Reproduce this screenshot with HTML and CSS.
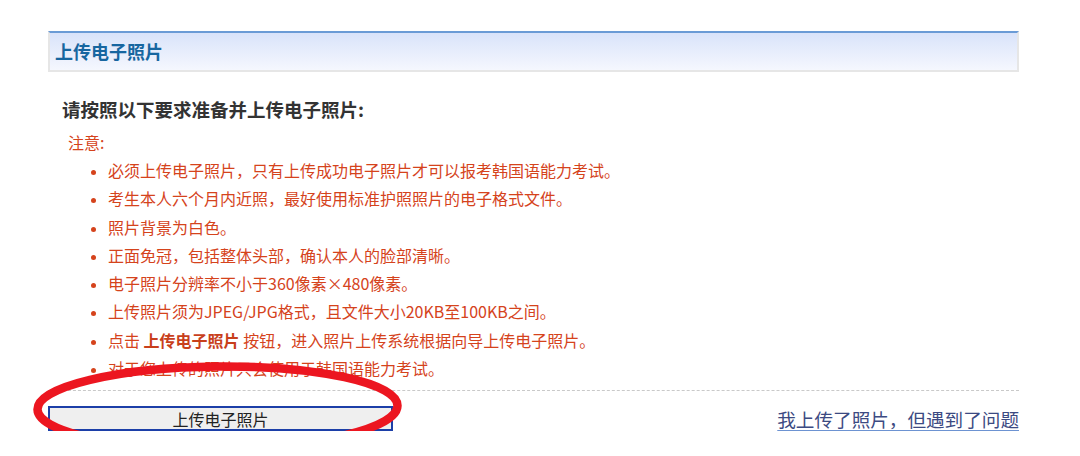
FILE: index.html
```html
<!DOCTYPE html>
<html lang="zh-CN">
<head>
    <meta charset="UTF-8">
    <title>上传电子照片</title>
    <link rel="stylesheet" href="styles.css">
</head>
<body>
    <div class="wrap">
        <!-- panel header -->
        <div class="panel-title">上传电子照片</div>

        <h3 class="intro">请按照以下要求准备并上传电子照片:</h3>

        <div class="notes">
            <p class="notes-label">注意:</p>
            <ul class="notes-list">
                <li>必须上传电子照片，只有上传成功电子照片才可以报考韩国语能力考试。</li>
                <li>考生本人六个月内近照，最好使用标准护照照片的电子格式文件。</li>
                <li>照片背景为白色。</li>
                <li>正面免冠，包括整体头部，确认本人的脸部清晰。</li>
                <li>电子照片分辨率不小于360像素×480像素。</li>
                <li>上传照片须为JPEG/JPG格式，且文件大小20KB至100KB之间。</li>
                <li>点击 <strong>上传电子照片</strong> 按钮，进入照片上传系统根据向导上传电子照片。</li>
                <li>对于您上传的照片只会使用于韩国语能力考试。</li>
            </ul>
        </div>

        <div class="actions">
            <button class="upload-btn">上传电子照片</button>
            <a class="help-link" href="#">我上传了照片，但遇到了问题</a>
        </div>

        <!-- red marker circle drawn over the button -->
        <svg class="marker" width="380" height="96" viewBox="0 0 380 96">
            <ellipse cx="187.5" cy="47.5" rx="180" ry="41" fill="none" stroke="#ec1620" stroke-width="8.5" transform="rotate(-0.6 187.5 47.5)"/>
        </svg>
    </div>
</body>
</html>
```

FILE: styles.css
```css
body {
    margin: 0;
    background-color: white;
    font-family: "Noto Sans CJK SC", "Liberation Sans", sans-serif;
}

.wrap {
    position: relative;
    width: 971px;
    margin: 31px 0 0 48px;
}

.panel-title {
    box-sizing: border-box;
    height: 41px;
    padding-left: 5px;
    border-top: 2px solid #6b9bd6;
    border-left: 2px solid #e6e6e6;
    border-right: 2px solid #e6e6e6;
    border-bottom: 2px solid #e6e6e6;
    background: linear-gradient(#d9e3fa, #f5f7fe);
    color: #1766a0;
    font-size: 18px;
    font-weight: bold;
    line-height: 37px;
}

.intro {
    margin: 25px 0 0 14px;
    color: #333;
    font-size: 18.5px;
    font-weight: bold;
    line-height: 24px;
}

.notes {
    color: #d5431c;
    font-size: 16px;
}

.notes-label {
    margin: 7px 0 0 20px;
    line-height: 28px;
}

.notes-list {
    margin: 0;
    padding-left: 60px;
    line-height: 28.3px;
}

.notes-list li::marker {
    font-size: 14px;
}

.notes-list strong {
    color: #c8401c;
}

.actions {
    display: flex;
    justify-content: space-between;
    align-items: center;
    margin-top: 8px;
    padding-top: 15px;
    border-top: 1px dashed #c9c9c9;
}

.upload-btn {
    width: 345px;
    height: 25px;
    padding: 0;
    border: 2px solid #1c3fa8;
    background-color: #efefef;
    color: #222;
    font-family: inherit;
    font-size: 16px;
    line-height: 20px;
}

.help-link {
    color: #3c4a82;
    font-size: 18.6px;
    line-height: 24px;
    text-decoration: underline;
    text-decoration-color: #6d93d2;
    text-underline-offset: 3px;
}

.marker {
    position: absolute;
    left: -18px;
    top: 329px;
}
```
